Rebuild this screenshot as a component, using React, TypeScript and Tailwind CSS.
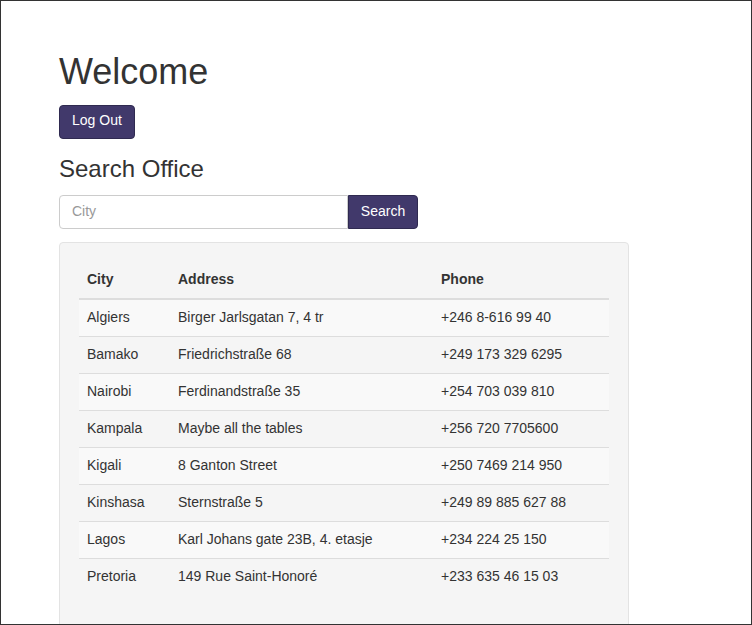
import React from "react";

const rows = [
  ["Algiers", "Birger Jarlsgatan 7, 4 tr", "+246 8-616 99 40"],
  ["Bamako", "Friedrichstraße 68", "+249 173 329 6295"],
  ["Nairobi", "Ferdinandstraße 35", "+254 703 039 810"],
  ["Kampala", "Maybe all the tables", "+256 720 7705600"],
  ["Kigali", "8 Ganton Street", "+250 7469 214 950"],
  ["Kinshasa", "Sternstraße 5", "+249 89 885 627 88"],
  ["Lagos", "Karl Johans gate 23B, 4. etasje", "+234 224 25 150"],
  ["Pretoria", "149 Rue Saint-Honoré", "+233 635 46 15 03"],
];

export default function App() {
  return (
    <div
      className="w-[752px] h-[625px] border border-[#333] overflow-hidden bg-white text-[#333] text-[14px] leading-[20px]"
      style={{ fontFamily: '"Liberation Sans", Arial, sans-serif' }}
    >
      <div className="pl-[58px] pt-[31px]">
        <h1 className="text-[36px] leading-[39.6px] font-normal mt-[20px] mb-[10px]">Welcome</h1>
        <button className="bg-[#41396b] text-white text-[14px] leading-[20px] px-[12px] pt-[4px] pb-[8px] rounded-[4px] border border-[#2f2a50] mt-[3px]">
          Log Out
        </button>
        <h3 className="text-[24px] leading-[26.4px] font-normal mt-[17px] mb-[13px]">Search Office</h3>
        <div className="flex w-[359px]">
          <input
            placeholder="City"
            className="w-[289px] h-[34px] border border-[#ccc] rounded-l-[4px] px-[12px] pb-[2px] text-[14px] placeholder:text-[#999] outline-none"
          />
          <button className="w-[70px] h-[34px] pb-[2px] bg-[#41396b] text-white rounded-r-[4px] border border-[#2f2a50]">Search</button>
        </div>
        <div className="w-[570px] mt-[13px] bg-[#f5f5f5] border border-[#e3e3e3] rounded-[4px] p-[19px] min-h-[500px]">
          <table className="w-[530px] border-collapse">
            <thead>
              <tr>
                <th className="text-left font-bold px-[8px] pt-[7px] pb-[9px] border-b-2 border-[#ddd] w-[91px]">City</th>
                <th className="text-left font-bold px-[8px] pt-[7px] pb-[9px] border-b-2 border-[#ddd] w-[263px]">Address</th>
                <th className="text-left font-bold px-[8px] pt-[7px] pb-[9px] border-b-2 border-[#ddd]">Phone</th>
              </tr>
            </thead>
            <tbody>
              {rows.map((r, i) => (
                <tr key={i} className={i % 2 === 0 ? "bg-[#f9f9f9]" : ""}>
                  {r.map((c, j) => (
                    <td key={j} className={`px-[8px] pt-[7px] pb-[9px] ${i > 0 ? "border-t border-[#ddd]" : ""}`}>
                      {c}
                    </td>
                  ))}
                </tr>
              ))}
            </tbody>
          </table>
        </div>
      </div>
    </div>
  );
}
